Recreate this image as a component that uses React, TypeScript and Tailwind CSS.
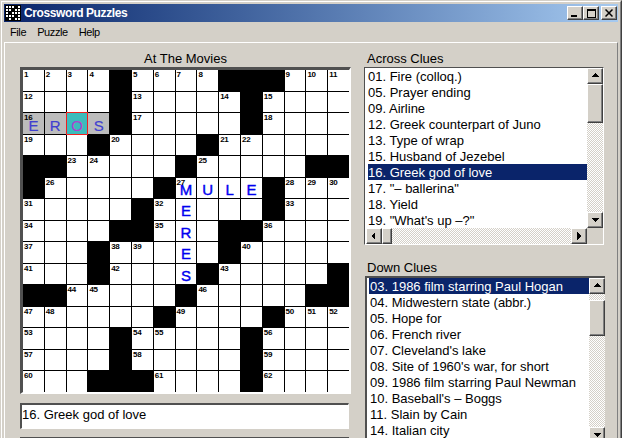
const rows = [
  "1 2 3 4 # 5 6 7 8 # # # 9 10 11",
  "12 . . . # 13 . . . 14 # 15 . . .",
  "16 . . . # 17 . . . . # 18 . . .",
  "19 . . # 20 . . . # 21 22 . . . .",
  "# # 23 24 . . . # 25 . . . . # #",
  "# 26 . . . . # 27 . . . # 28 29 30",
  "31 . . . . # 32 . . . . # 33 . .",
  "34 . . . # # 35 . . # # 36 . . .",
  "37 . . # 38 39 . . . # 40 . . . .",
  "41 . . # 42 . . . # 43 . . . . #",
  "# # 44 45 . . . # 46 . . . . # #",
  "47 48 . . . . # 49 . . . # 50 51 52",
  "53 . . . # 54 55 . . . # 56 . . .",
  "57 . . . # 58 . . . . # 59 . . .",
  "60 . . # # # 61 . . . # 62 . . .",
];

const letters: Record<string, string> = {
  "2,0": "E", "2,1": "R", "2,2": "O", "2,3": "S",
  "5,7": "M", "5,8": "U", "5,9": "L", "5,10": "E",
  "6,7": "E", "7,7": "R", "8,7": "E", "9,7": "S",
};

const across = ["01. Fire (colloq.)", "05. Prayer ending", "09. Airline", "12. Greek counterpart of Juno", "13. Type of wrap", "15. Husband of Jezebel", "16. Greek god of love", '17. "– ballerina"', "18. Yield", '19. "What\'s up –?"'];
const down = ["03. 1986 film starring Paul Hogan", "04. Midwestern state (abbr.)", "05. Hope for", "06. French river", "07. Cleveland's lake", "08. Site of 1960's war, for short", "09. 1986 film starring Paul Newman", "10. Baseball's – Boggs", "11. Slain by Cain", "14. Italian city"];

const bevel = "border border-t-white border-l-white border-r-[#404040] border-b-[#404040] bg-[#d4d0c8] shadow-[inset_-1px_-1px_0_#808080]";
const dither = "bg-[repeating-conic-gradient(#d4d0c8_0_25%,#ffffff_0_50%)] bg-[length:2px_2px]";

function Arrow({ dir }: { dir: "up" | "down" | "left" | "right" }) {
  const pts = { up: "4,1 0,5 8,5", down: "0,2 8,2 4,6", left: "5,0 5,8 1,4", right: "2,0 2,8 6,4" }[dir];
  return (
    <svg width="8" height="8" viewBox="0 0 8 8" shapeRendering="crispEdges">
      <polygon points={pts} fill="#000" />
    </svg>
  );
}

function ScrollBtn({ dir }: { dir: "up" | "down" | "left" | "right" }) {
  return (
    <div className={`${bevel} w-4 h-4 shrink-0 flex items-center justify-center`}>
      <Arrow dir={dir} />
    </div>
  );
}

function Logo() {
  const cells = ["11101", "11011", "10111", "11101", "01011"];
  return (
    <svg width="16" height="16" viewBox="0 0 16 16" shapeRendering="crispEdges" className="shrink-0">
      <rect width="16" height="16" fill="#000" />
      {cells.map((r, y) =>
        r.split("").map((c, x) =>
          c === "1" ? <rect key={`${x}-${y}`} x={x * 3 + 1} y={y * 3 + 1} width="2" height="2" fill="#fff" /> : null
        )
      )}
    </svg>
  );
}

function WinBtn({ children }: { children: React.ReactNode }) {
  return <div className={`${bevel} w-4 h-[14px] flex items-center justify-center`}>{children}</div>;
}

function Cell({ token, r, c }: { token: string; r: number; c: number }) {
  if (token === "#") return <div className="bg-black" />;
  const letter = letters[`${r},${c}`];
  const inWord = r === 2 && c < 4;
  const current = r === 2 && c === 2;
  const bg = current ? "bg-[#3cbcbc] outline outline-1 outline-[#f02020] z-10" : inWord ? "bg-[#bcbcbc]" : "bg-white";
  const color = current
    ? "text-[#b040d0]"
    : inWord
      ? "text-[#4040d0] [-webkit-text-stroke:0.2px_#4040d0]"
      : "text-[#0000f0] [-webkit-text-stroke:0.4px_#0000f0]";
  return (
    <div className={`relative overflow-visible ${bg}`}>
      {token !== "." && (
        <span className="absolute left-[1px] top-[0px] text-[8px] leading-[10px] font-bold text-black tracking-[-0.3px] z-10">{token}</span>
      )}
      {letter && (
        <span className={`absolute inset-0 ${inWord ? "pt-[4px]" : "pt-[3px]"} text-center text-[15px] leading-[18px] ${color}`}>{letter}</span>
      )}
    </div>
  );
}

function ClueList({ items, offset }: { items: string[]; offset?: boolean }) {
  return (
    <div className="flex-1 min-w-0 pl-[2px] overflow-hidden">
      {items.map((t, i) => (
        <div
          key={t}
          className={`h-4 leading-[17px] text-[13px] whitespace-nowrap ${offset ? "pl-[1px]" : "pl-[0px]"} ${i === (offset ? 0 : 6) ? "bg-[#0a246a] text-white" : "text-black"}`}
        >
          {t}
        </div>
      ))}
    </div>
  );
}

export default function App() {
  return (
    <div className="w-[622px] h-[438px] overflow-hidden bg-[#d4d0c8] text-black font-['Liberation_Sans',sans-serif]">
      <div className="h-[460px] border border-[#d4d0c8] border-r-[#404040]">
        <div className="h-full border border-white border-r-[#808080] p-[2px] flex flex-col">
          <div className="h-[18px] shrink-0 flex items-center justify-between bg-gradient-to-r from-[#0a246a] to-[#a6caf0] pl-[1px] pr-[1px]">
            <div className="flex items-center gap-[2px]">
              <Logo />
              <span className="text-white font-bold text-[12px] tracking-[-0.4px] leading-[18px] ml-[1px]">Crossword Puzzles</span>
            </div>
            <div className="flex items-center">
              <WinBtn>
                <div className="w-[6px] h-[2px] bg-black mt-[6px] -ml-[2px]" />
              </WinBtn>
              <WinBtn>
                <div className="w-[9px] h-[9px] border border-black border-t-2" />
              </WinBtn>
              <div className="ml-[2px]">
                <WinBtn>
                  <svg width="8" height="8" viewBox="0 0 8 8"><path d="M0.5 0.5 7.5 7.5M7.5 0.5 0.5 7.5" stroke="#000" strokeWidth="1.5" /></svg>
                </WinBtn>
              </div>
            </div>
          </div>

          <div className="h-5 shrink-0 flex items-center gap-[11px] pl-[6px] text-[11px] tracking-[-0.4px]">
            <span>File</span>
            <span>Puzzle</span>
            <span>Help</span>
          </div>

          <div className="flex-1 border-t border-l border-white border-r border-r-[#808080] flex pl-[15px]">
            <div className="w-[331px] shrink-0">
              <div className="h-6 pt-[8px] text-center text-[13px] leading-4 text-black">At The Movies</div>
              <div className="border-t-[3px] border-l-[3px] border-t-[#505050] border-l-[#505050] border-r-2 border-b-2 border-r-white border-b-white">
                <div className="grid h-[322px] grid-cols-[repeat(15,1fr)] grid-rows-[repeat(15,1fr)] gap-[1px] bg-black">
                  {rows.map((row, r) =>
                    row.split(" ").map((t, c) => <Cell key={`${r}-${c}`} token={t} r={r} c={c} />)
                  )}
                </div>
              </div>
              <div className="mt-[9px] w-[329px] h-[26px] border-t-2 border-l-2 border-t-[#505050] border-l-[#505050] border-r border-b border-r-white border-b-white bg-white text-[13px] leading-[20px]">
                16. Greek god of love
              </div>
              <div className="mt-[8px] w-[329px] h-10 border-t-2 border-l-2 border-t-[#505050] border-l-[#505050] bg-white" />
            </div>

            <div className="ml-[13px] w-[242px] shrink-0">
              <div className="h-[24px] pt-[8px] pl-[3px] text-[13px] leading-4">Across Clues</div>
              <div className="w-[240px] h-[178px] border-t border-l border-r border-b border-[#505050] border-r-white border-b-white bg-white pl-[1px] flex flex-col">
                <div className="flex h-[160px] shrink-0">
                  <ClueList items={across} />
                  <div className="w-4 shrink-0 flex flex-col">
                    <ScrollBtn dir="up" />
                    <div className={`${bevel} h-[39px] shrink-0`} />
                    <div className={`flex-1 ${dither}`} />
                    <ScrollBtn dir="down" />
                  </div>
                </div>
                <div className="flex h-4 shrink-0">
                  <ScrollBtn dir="left" />
                  <div className={`${bevel} w-[10px] shrink-0`} />
                  <div className={`flex-1 ${dither}`} />
                  <ScrollBtn dir="right" />
                  <div className="w-4 bg-[#d4d0c8]" />
                </div>
              </div>
              <div className="h-[31px] pt-[15px] pl-[3px] text-[13px] leading-4">Down Clues</div>
              <div className="w-[240px] ml-[1px] h-[175px] border-t-2 border-l-2 border-[#505050] bg-white flex">
                <ClueList items={down} offset />
                <div className="w-4 shrink-0 flex flex-col">
                  <ScrollBtn dir="up" />
                  <div className={`h-[6px] shrink-0 ${dither}`} />
                  <div className={`${bevel} h-[36px] shrink-0`} />
                  <div className={`h-[91px] shrink-0 ${dither}`} />
                  <ScrollBtn dir="down" />
                </div>
              </div>
            </div>
          </div>
        </div>
      </div>
    </div>
  );
}
